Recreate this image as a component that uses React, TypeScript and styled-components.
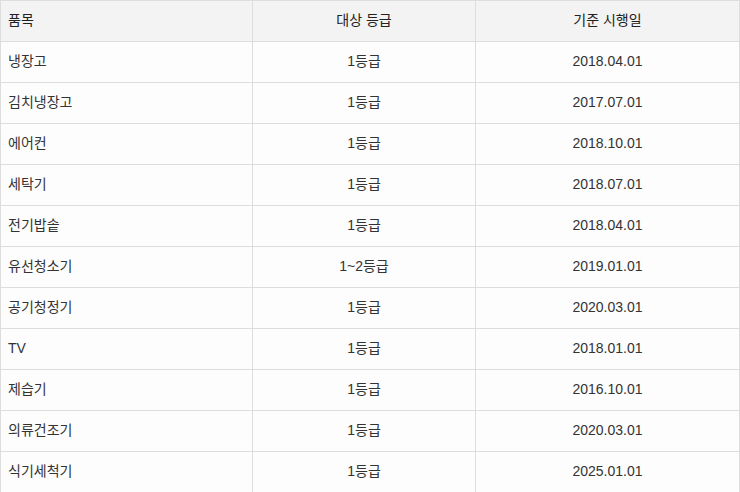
import React from 'react';
import styled, { createGlobalStyle } from 'styled-components';

const GlobalStyle = createGlobalStyle`
  body {
    margin: 0;
    background: #ffffff;
    font-family: "Liberation Sans", "Noto Sans CJK KR", sans-serif;
  }
`

const Table = styled.table`
  width: 740px;
  border-collapse: collapse;
  table-layout: fixed;
  font-size: 14px;
  line-height: 16px;
  color: #333333;
`

const HeadCell = styled.th<{ $align?: string }>`
  height: 37px;
  padding: 0 7px 3px;
  background: #f3f3f3;
  border: 1px solid #dddddd;
  font-weight: normal;
  color: #222222;
  text-align: ${p => p.$align || 'center'};
`

const Cell = styled.td<{ $align?: string }>`
  height: 37px;
  padding: 0 7px 3px;
  background: #fdfdfd;
  border: 1px solid #dddddd;
  text-align: ${p => p.$align || 'center'};
`

const rows = [
  ['냉장고', '1등급', '2018.04.01'],
  ['김치냉장고', '1등급', '2017.07.01'],
  ['에어컨', '1등급', '2018.10.01'],
  ['세탁기', '1등급', '2018.07.01'],
  ['전기밥솥', '1등급', '2018.04.01'],
  ['유선청소기', '1~2등급', '2019.01.01'],
  ['공기청정기', '1등급', '2020.03.01'],
  ['TV', '1등급', '2018.01.01'],
  ['제습기', '1등급', '2016.10.01'],
  ['의류건조기', '1등급', '2020.03.01'],
  ['식기세척기', '1등급', '2025.01.01'],
]

const App: React.FC = () => {
  return (
    <>
      <GlobalStyle />
      <Table>
        <colgroup>
          <col style={{ width: 252 }} />
          <col style={{ width: 223 }} />
          <col />
        </colgroup>
        <thead>
          <tr>
            <HeadCell $align="left">품목</HeadCell>
            <HeadCell>대상 등급</HeadCell>
            <HeadCell>기준 시행일</HeadCell>
          </tr>
        </thead>
        <tbody>
          {rows.map(([item, grade, date]) => (
            <tr key={item}>
              <Cell $align="left">{item}</Cell>
              <Cell>{grade}</Cell>
              <Cell>{date}</Cell>
            </tr>
          ))}
        </tbody>
      </Table>
    </>
  )
}

export default App;
